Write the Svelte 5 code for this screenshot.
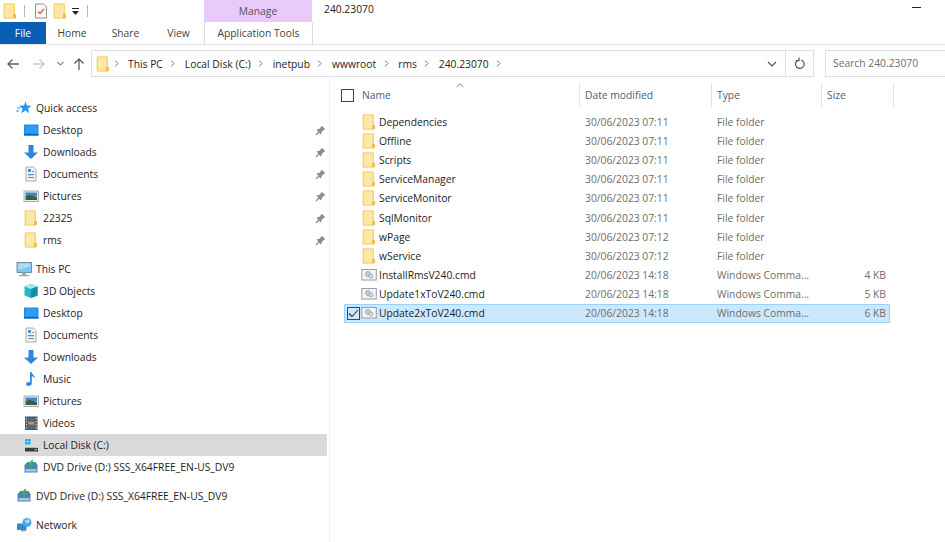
<script>
  const quick = [
    { label: 'Desktop', icon: 'desktop' },
    { label: 'Downloads', icon: 'download' },
    { label: 'Documents', icon: 'document' },
    { label: 'Pictures', icon: 'picture' },
    { label: '22325', icon: 'folder' },
    { label: 'rms', icon: 'folder' }
  ];
  const pc = [
    { label: '3D Objects', icon: 'cube' },
    { label: 'Desktop', icon: 'desktop' },
    { label: 'Documents', icon: 'document' },
    { label: 'Downloads', icon: 'download' },
    { label: 'Music', icon: 'music' },
    { label: 'Pictures', icon: 'picture' },
    { label: 'Videos', icon: 'video' },
    { label: 'Local Disk (C:)', icon: 'disk', active: true },
    { label: 'DVD Drive (D:) SSS_X64FREE_EN-US_DV9', icon: 'dvd' }
  ];
  const crumbs = ['This PC', 'Local Disk (C:)', 'inetpub', 'wwwroot', 'rms', '240.23070'];
  const folder = 'File folder';
  const cmd = 'Windows Comma...';
  const files = [
    { name: 'Dependencies', date: '30/06/2023 07:11', type: folder },
    { name: 'Offline', date: '30/06/2023 07:11', type: folder },
    { name: 'Scripts', date: '30/06/2023 07:11', type: folder },
    { name: 'ServiceManager', date: '30/06/2023 07:11', type: folder },
    { name: 'ServiceMonitor', date: '30/06/2023 07:11', type: folder },
    { name: 'SqlMonitor', date: '30/06/2023 07:11', type: folder },
    { name: 'wPage', date: '30/06/2023 07:12', type: folder },
    { name: 'wService', date: '30/06/2023 07:12', type: folder },
    { name: 'InstallRmsV240.cmd', date: '20/06/2023 14:18', type: cmd, size: '4 KB' },
    { name: 'Update1xToV240.cmd', date: '20/06/2023 14:18', type: cmd, size: '5 KB' },
    { name: 'Update2xToV240.cmd', date: '20/06/2023 14:18', type: cmd, size: '6 KB', selected: true }
  ];
</script>

{#snippet icon(name, size = 16)}
  <svg class="icon" width={size} height={size} viewBox="0 0 16 16">
    {#if name === 'folder'}
      <path d="M2 .8h10.500v14.400H2z" fill="#fbdc84" stroke="#f1cb62" stroke-width=".8" />
      <path d="M3 1.800h8.500v12.400H3z" fill="#fde7a6" />
      <path d="M11 11h3v4.200h-3z" fill="#efc04f" />
    {:else if name === 'desktop'}
      <rect x="1" y="2.500" width="14.500" height="11" rx=".6" fill="#1e88e5" />
      <path d="M2 3.500h12.500v8L2 11.500z" fill="#2e9cf2" />
      <path d="M1 12h14.500v1.500H1z" fill="#0f62ab" />
    {:else if name === 'download'}
      <path d="M5.500 1h5v7.500h4.500L8 15 1 8.500h4.500z" fill="#2f86dc" />
    {:else if name === 'document'}
      <path d="M3 1h7.500L13 3.500V15H3z" fill="#f2f2f2" stroke="#9a9a9a" stroke-width=".8" />
      <path d="M5 3h3v3H5zM5 8h6v1.300H5z" fill="#3f98db" />
      <path d="M5 11h6v1H5zM9 5h2v1H9z" fill="#8a8a8a" />
    {:else if name === 'picture'}
      <rect x="1" y="3" width="14.500" height="10.500" fill="#ededed" stroke="#9b9b9b" stroke-width=".8" />
      <path d="M2.500 4.500h11.500v4H2.500z" fill="#3f88c5" />
      <path d="M2.500 8.500l4-1.500 7.500 2v3H2.500z" fill="#3c5a46" />
    {:else if name === 'cube'}
      <path d="M8 1l6.500 2.500v9L8 15l-6.500-2.500v-9z" fill="#26b6c6" />
      <path d="M8 1l6.500 2.500L8 6 1.500 3.500z" fill="#a5e6ec" />
      <path d="M8 6l6.500-2.500v9L8 15z" fill="#0f8ea5" />
    {:else if name === 'music'}
      <path d="M7 1h1.500c.5 3 4 3.500 3.500 7-.3-1.500-1.500-2.500-3.200-2.800V12.500C8.800 14 7.200 15 5.500 15 4 15 3 14.200 3 13.100 3 11.800 4.400 11 5.800 11c.5 0 .9.100 1.200.2z" fill="#2a8be0" />
    {:else if name === 'video'}
      <rect x="2" y="1.500" width="12.500" height="13.500" fill="#555" />
      <path d="M5 3h6.500v10.500H5z" fill="#3c6f9c" />
      <path d="M5 7h6.500v2.500H5z" fill="#d8912f" />
      <path d="M3 3h1v1.500H3zM3 6h1v1.500H3zM3 9h1v1.500H3zM3 12h1v1.500H3zM12.500 3h1v1.500h-1zM12.500 6h1v1.500h-1zM12.500 9h1v1.500h-1zM12.500 12h1v1.500h-1z" fill="#ddd" />
    {:else if name === 'disk'}
      <path d="M2 2h2.500v2.500H2zM5 2h2.500v2.500H5zM2 5h2.500v2.500H2zM5 5h2.500v2.500H5z" fill="#20a5e8" />
      <path d="M2 10h12v1H2z" fill="#b5b5b5" />
      <rect x="2" y="11" width="13" height="3.500" fill="#3d3d3d" />
      <rect x="11.500" y="12" width="2.500" height="1.200" fill="#6fd13f" />
    {:else if name === 'dvd'}
      <path d="M1.500 6l3-3h8l2 3v7.500h-13z" fill="#4a85b8" />
      <path d="M2.500 10h11v2.500h-11z" fill="#a9c4dc" />
      <path d="M8.500 1L5.500 5.500h2.200L6 10l5-5.500H8.500l2-3.500z" fill="#3fb54a" />
    {:else if name === 'network'}
      <path d="M5 13h5v1.500H5z" fill="#9aa7b2" />
      <rect x="1" y="6.500" width="9.500" height="6.500" fill="#2f8edb" />
      <circle cx="11" cy="5.500" r="4.500" fill="#4aa5e6" />
      <path d="M8.500 3.500l4-1.500 1.500 3-3 2z" fill="#a9dcf5" />
    {:else if name === 'pc'}
      <rect x="1" y="1.500" width="14.500" height="10" fill="#7fc4ee" stroke="#5d7d96" stroke-width=".8" />
      <path d="M2 2.500h12.500v3L2 9z" fill="#a8dcf8" />
      <path d="M6 11.500h4V14H6zM3 14h10v1.200H3z" fill="#a6a6a6" />
    {:else if name === 'star'}
      <path d="M9.500 1.500l1.500 4 4.500.3-3.500 2.800 1.200 4.600-3.900-2.600-4 2.600 1.300-4.600L3 5.800l5-.3z" fill="#2b95e3" />
      <path d="M1 8h3.500M0 11h3" stroke="#2b95e3" stroke-width="1" />
    {:else if name === 'pin'}
      <path d="M9.500 2l4.500 4.500-1.500.7-3 2.500-.3 2.300-1 1-2-2.200L3 14l-1-1 3.400-3.700-2.200-2 1-1 2.300-.3 2.500-3z" fill="#8e8e8e" />
    {:else if name === 'cmd'}
      <rect x=".8" y="2.500" width="14.500" height="10.500" fill="#f4f4f4" stroke="#9c9c9c" />
      <circle cx="7" cy="7" r="2.500" fill="#c3cdd6" stroke="#8a9aa8" stroke-width=".7" />
      <circle cx="10" cy="9" r="2" fill="#d7e0e7" stroke="#8a9aa8" stroke-width=".7" />
    {/if}
  </svg>
{/snippet}

{#snippet navRow(item, pinned)}
  <div class="nav-row nested" class:active={item.active}>
    {@render icon(item.icon)}
    <span class="nav-label">{item.label}</span>
    {#if pinned}<span class="pin">{@render icon('pin', 13)}</span>{/if}
  </div>
{/snippet}

<div class="window">
  <div class="top">
    <div class="qat">
      {@render icon('folder')}
      <span class="qat-sep"></span>
      <svg class="icon props" width="14" height="16" viewBox="0 0 14 16">
        <path d="M1.500 1h8l3 3v11h-11z" fill="#fbfbfb" stroke="#8f8f8f" />
        <path d="M4 8.500l2 2 4-4.500" fill="none" stroke="#d9583b" stroke-width="1.300" />
      </svg>
      {@render icon('folder')}
      <svg class="icon drop" width="9" height="9" viewBox="0 0 9 9">
        <path d="M1 1h7v1H1zM1 4h7L4.500 8z" fill="#222" />
      </svg>
      <span class="qat-sep"></span>
    </div>
    <div class="manage">Manage</div>
    <div class="title">240.23070</div>
    <div class="minimize"></div>
  </div>

  <div class="tabs">
    <div class="tab file">File</div>
    <div class="tab home">Home</div>
    <div class="tab share">Share</div>
    <div class="tab view">View</div>
    <div class="tab tools">Application Tools</div>
  </div>

  <div class="address-row">
    <div class="arrows">
      <svg width="14" height="12" viewBox="0 0 14 12"><path d="M13 6H2M6.500 1.500L2 6l4.500 4.500" fill="none" stroke="#5f5f5f" stroke-width="1.300" /></svg>
      <svg width="14" height="12" viewBox="0 0 14 12"><path d="M1 6h11M7.500 1.500L12 6l-4.500 4.500" fill="none" stroke="#c9c9c9" stroke-width="1.300" /></svg>
      <svg width="7" height="5" viewBox="0 0 7 5"><path d="M.5 1l3 3 3-3" fill="none" stroke="#8a8a8a" stroke-width="1.100" /></svg>
      <svg width="12" height="14" viewBox="0 0 12 14"><path d="M6 13V2M1.500 6.500L6 2l4.500 4.500" fill="none" stroke="#5f5f5f" stroke-width="1.300" /></svg>
    </div>
    <div class="address">
      {@render icon('folder')}
      <div class="crumbs">
        {#each crumbs as crumb}
          <svg class="chev" width="5" height="7" viewBox="0 0 5 7"><path d="M1 .5l3 3-3 3" fill="none" stroke="#777" /></svg>
          <span>{crumb}</span>
        {/each}
        <svg class="chev" width="5" height="7" viewBox="0 0 5 7"><path d="M1 .5l3 3-3 3" fill="none" stroke="#777" /></svg>
      </div>
      <svg class="drop-arrow" width="10" height="6" viewBox="0 0 10 6"><path d="M1 1l4 4 4-4" fill="none" stroke="#555" stroke-width="1.200" /></svg>
      <div class="refresh">
        <svg width="11" height="13" viewBox="0 0 11 13"><path d="M3.500 3.500A4.300 4.300 0 1 0 7 3M5 .5v3.200H1.800" fill="none" stroke="#555" stroke-width="1.200" /></svg>
      </div>
    </div>
    <div class="search">Search 240.23070</div>
  </div>

  <div class="body">
    <nav class="sidebar">
      <div class="nav-row top-level first">
        {@render icon('star')}
        <span class="nav-label">Quick access</span>
      </div>
      {#each quick as item}
        {@render navRow(item, true)}
      {/each}

      <div class="nav-row top-level group">
        {@render icon('pc')}
        <span class="nav-label">This PC</span>
      </div>
      {#each pc as item}
        {@render navRow(item, false)}
      {/each}

      <div class="nav-row top-level group">
        {@render icon('dvd')}
        <span class="nav-label">DVD Drive (D:) SSS_X64FREE_EN-US_DV9</span>
      </div>
      <div class="nav-row top-level group">
        {@render icon('network')}
        <span class="nav-label">Network</span>
      </div>
    </nav>

    <main class="list">
      <div class="sort-caret">
        <svg width="8" height="5" viewBox="0 0 8 5"><path d="M.5 4L4 .8 7.500 4" fill="none" stroke="#8a8a8a" /></svg>
      </div>
      <div class="header">
        <span class="check-box"></span>
        <div class="col col-name">Name</div>
        <div class="col col-date">Date modified</div>
        <div class="col col-type">Type</div>
        <div class="col col-size">Size</div>
      </div>
      {#each files as file}
        <div class="file-row" class:selected={file.selected}>
          <span class="row-check">
            {#if file.selected}
              <span class="check-box small">
                <svg width="11" height="9" viewBox="0 0 11 9"><path d="M1 4.500l3 3L10 1" fill="none" stroke="#333" stroke-width="1.100" /></svg>
              </span>
            {/if}
          </span>
          <span class="file-icon">{@render icon(file.size ? 'cmd' : 'folder')}</span>
          <span class="file-name">{file.name}</span>
          <span class="file-date">{file.date}</span>
          <span class="file-type">{file.type}</span>
          <span class="file-size">{file.size ?? ''}</span>
        </div>
      {/each}
    </main>
  </div>
</div>

<style>
  :global(body) {
    margin: 0;
    background: #fff;
  }

  .window {
    width: 945px;
    height: 542px;
    overflow: hidden;
    background: #fff;
    font-family: "Open Sans", "Noto Sans", sans-serif;
    font-size: 10.3px;
    color: #1d1d1d;
  }

  .icon {
    display: block;
    flex-shrink: 0;
  }

  .top {
    height: 22px;
    display: flex;
    align-items: center;
  }

  .qat {
    width: 204px;
    display: flex;
    align-items: center;
    padding-left: 2px;
    box-sizing: border-box;
  }

  .qat-sep {
    width: 1px;
    height: 12px;
    background: #b5b5b5;
    margin: 0 9px 0 6px;
  }

  .qat .props {
    margin: 0 4px 0 0;
  }

  .qat .drop {
    margin: 0 1px 0 3px;
  }

  .manage {
    width: 108px;
    height: 22px;
    line-height: 22px;
    text-align: center;
    background: #e9cbfb;
    color: #55505a;
  }

  .title {
    margin-left: 12px;
    flex: 1;
    margin-top: -5px;
  }

  .minimize {
    width: 9px;
    height: 1px;
    background: #222;
    margin: 0 24px 8px 0;
  }

  .tabs {
    height: 22px;
    display: flex;
    border-bottom: 1px solid #e3e3e3;
    color: #3f3f3f;
  }

  .tab {
    line-height: 22px;
    text-align: center;
  }

  .file {
    width: 46px;
    background: #0a5fb4;
    color: #fff;
  }

  .home { width: 52px; }
  .share { width: 55px; }
  .view { width: 51px; }

  .tools {
    width: 107px;
    border-left: 1px solid #dcdcdc;
    border-right: 1px solid #dcdcdc;
  }

  .address-row {
    height: 27px;
    margin-top: 5px;
    display: flex;
    align-items: center;
  }

  .arrows {
    width: 91px;
    display: flex;
    align-items: center;
    box-sizing: border-box;
    padding-left: 6px;
    gap: 6px;
  }

  .arrows svg:nth-child(2) { margin-left: 6px; }
  .arrows svg:nth-child(3) { margin: 0 3px 0 5px; }

  .address {
    width: 723px;
    height: 27px;
    box-sizing: border-box;
    border: 1px solid #dedede;
    display: flex;
    align-items: center;
    padding-left: 3px;
  }

  .crumbs {
    flex: 1;
    display: flex;
    align-items: center;
    gap: 7.5px;
    margin-left: 2.5px;
  }

  .chev {
    margin-right: 2px;
  }

  .drop-arrow {
    margin-right: 8px;
  }

  .refresh {
    width: 27px;
    height: 25px;
    border-left: 1px solid #dedede;
    display: flex;
    align-items: center;
    justify-content: center;
  }

  .search {
    margin-left: 11px;
    flex: 1;
    height: 27px;
    line-height: 25px;
    box-sizing: border-box;
    border: 1px solid #dedede;
    border-right: 0;
    padding-left: 7px;
    color: #6d6d6d;
    white-space: nowrap;
    overflow: hidden;
  }

  .body {
    display: flex;
    height: 466px;
  }

  .sidebar {
    width: 330px;
    box-sizing: border-box;
    border-right: 1px solid #f0f0f0;
    padding-top: 20px;
    flex-shrink: 0;
  }

  .nav-row {
    height: 22px;
    width: 327px;
    display: flex;
    align-items: center;
    box-sizing: border-box;
  }

  .nav-row .nav-label {
    margin-left: 4px;
    white-space: nowrap;
  }

  .top-level {
    padding-left: 16px;
    margin-bottom: 0;
  }

  .group {
    margin-top: 7px;
  }

  .nested {
    padding-left: 23px;
  }

  .active {
    background: #d9d9d9;
  }

  .pin {
    margin-left: auto;
    margin-right: 0;
  }

  .list {
    flex: 1;
    position: relative;
    padding-top: 6px;
  }

  .sort-caret {
    position: absolute;
    left: 126px;
    top: 6px;
    line-height: 0;
  }

  .header {
    height: 24px;
    display: flex;
    align-items: center;
    color: #4c607a;
    margin-bottom: 5px;
  }

  .check-box {
    width: 11px;
    height: 11px;
    border: 1px solid #444;
    display: flex;
    align-items: center;
    justify-content: center;
    margin-left: 11px;
    flex-shrink: 0;
  }

  .col {
    height: 24px;
    line-height: 24px;
    box-sizing: border-box;
    border-right: 1px solid #e5e5e5;
    flex-shrink: 0;
  }

  .col-name {
    width: 218px;
    margin-left: 8px;
  }

  .col-date {
    width: 132px;
    padding-left: 5px;
  }

  .col-type {
    width: 110px;
    padding-left: 5px;
  }

  .col-size {
    width: 72px;
    padding-left: 5px;
  }

  .file-row {
    height: 19.2px;
    width: 546px;
    margin-left: 14px;
    box-sizing: border-box;
    display: flex;
    align-items: center;
    color: #6d6d6d;
  }

  .file-row.selected {
    background: #cce8ff;
    outline: 1px solid #99d1ff;
    outline-offset: -1px;
  }

  .row-check {
    width: 17px;
    flex-shrink: 0;
  }

  .check-box.small {
    margin-left: 3px;
  }

  .file-icon {
    width: 18px;
    flex-shrink: 0;
  }

  .file-name {
    width: 206px;
    color: #1d1d1d;
    flex-shrink: 0;
  }

  .file-date {
    width: 132px;
    flex-shrink: 0;
  }

  .file-type {
    width: 110px;
    flex-shrink: 0;
  }

  .file-size {
    width: 59px;
    text-align: right;
  }
</style>
